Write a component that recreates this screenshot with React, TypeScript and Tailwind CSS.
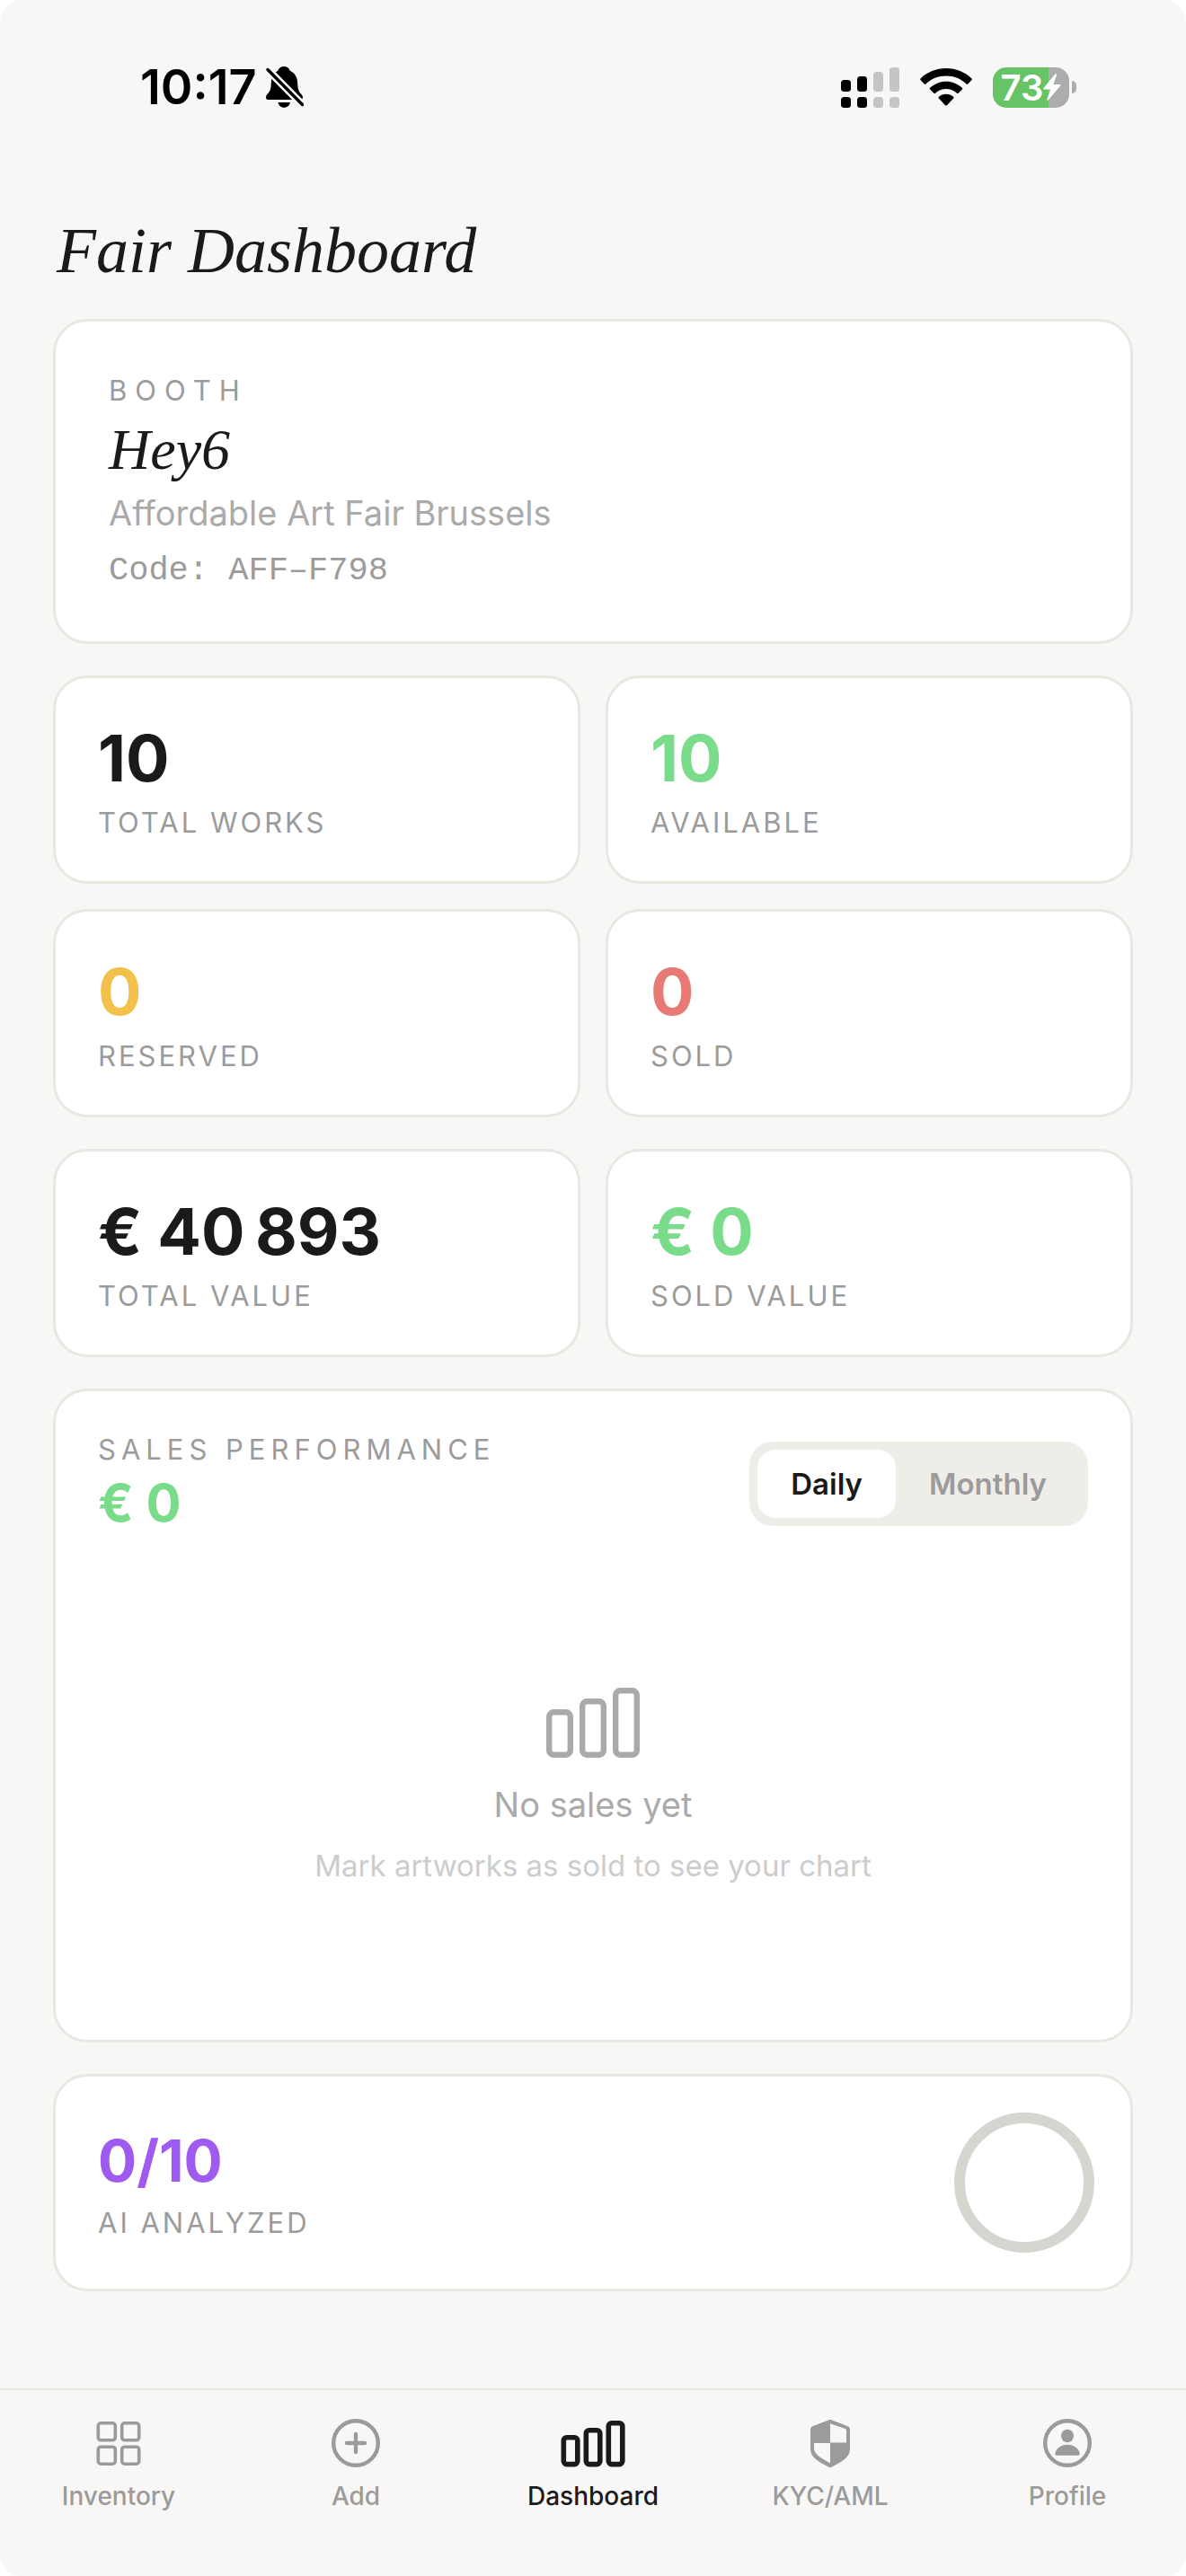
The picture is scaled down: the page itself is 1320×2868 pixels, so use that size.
import { useState } from "react";

const stats = [
  { label: "TOTAL WORKS", value: "10", color: "text-[#1a1a1a]" },
  { label: "AVAILABLE", value: "10", color: "text-[#7adc8b]" },
  { label: "RESERVED", value: "0", color: "text-[#f2c14b]" },
  { label: "SOLD", value: "0", color: "text-[#e77a75]" },
];

const values = [
  { label: "TOTAL VALUE", value: "€ 40\u202f893", color: "text-[#1a1a1a]" },
  { label: "SOLD VALUE", value: "€ 0", color: "text-[#7adc8b]" },
];

const tabs = [
  { id: "inventory", label: "Inventory", icon: GridIcon },
  { id: "add", label: "Add", icon: AddIcon },
  { id: "dashboard", label: "Dashboard", icon: BarsIcon },
  { id: "kyc", label: "KYC/AML", icon: ShieldIcon },
  { id: "profile", label: "Profile", icon: ProfileIcon },
];

function BellOffIcon() {
  return (
    <svg viewBox="0 0 42 46" className="h-[46px] w-[42px]" aria-hidden="true">
      <path
        d="M20 0c3.400 0 6 2 6.600 4.800 5.400 2.200 8.400 7.200 8.600 13.600.200 6.400 1 9 3.800 12 1.600 1.800 2 3 2 4.200 0 1.600-1.200 2.400-2.800 2.400H2.800C1.200 37 0 36 0 34.400c0-1.600.600-2.600 2.200-4.400 2.600-3 3.400-5.600 3.600-11.600C6 12 8.600 7 13.400 4.800 14.200 2 16.800 0 20 0z"
        fill="#000"
      />
      <path d="M13.500 40h13.400c-.500 3.400-3.300 5.800-6.700 5.800s-6.200-2.400-6.700-5.800z" fill="#000" />
      <path d="M2 3.500 40.500 42.500" stroke="#f8f7f5" strokeWidth="8.500" />
      <path d="M2 3.500 40.500 42.500" stroke="#000" strokeWidth="3.400" strokeLinecap="round" />
    </svg>
  );
}

function SignalIcon() {
  return (
    <svg viewBox="0 0 65 45" className="h-[45px] w-[65px]" aria-hidden="true">
      <g fill="#000">
        <rect x="0" y="14" width="11" height="13" rx="3.500" />
        <rect x="18" y="10" width="11" height="17" rx="3.500" />
        <rect x="0" y="33" width="11" height="12" rx="3.500" />
        <rect x="18" y="33" width="11" height="12" rx="3.500" />
      </g>
      <g fill="#c6c5c3">
        <rect x="36" y="5" width="11" height="22" rx="3.500" />
        <rect x="54" y="0" width="11" height="27" rx="3.500" />
        <rect x="36" y="33" width="11" height="12" rx="3.500" />
        <rect x="54" y="33" width="11" height="12" rx="3.500" />
      </g>
    </svg>
  );
}

function WifiIcon() {
  return (
    <svg viewBox="0 0 58 42" className="h-[42px] w-[58px]" aria-hidden="true">
      <path
        d="M29 0C18 0 8 4.300.500 11.400c-.500.500-.500 1.200 0 1.700l4.200 4.400c.500.500 1.200.500 1.700 0C12.300 11.900 20.300 8.600 29 8.600s16.700 3.300 22.600 8.900c.500.500 1.200.500 1.700 0l4.200-4.400c.500-.500.500-1.200 0-1.700C50 4.300 40 0 29 0z"
        fill="#000"
      />
      <path
        d="M29 14.700c-6.900 0-13.200 2.700-17.900 7.100-.500.500-.500 1.200 0 1.700l4.200 4.300c.500.500 1.200.500 1.700 0 3.200-2.900 7.400-4.700 12-4.700s8.800 1.800 12 4.700c.500.500 1.200.500 1.700 0l4.200-4.300c.500-.500.500-1.200 0-1.700-4.700-4.400-11-7.100-17.900-7.100z"
        fill="#000"
      />
      <path
        d="M29 28.800c-3.100 0-5.900 1.100-8.100 3-.600.500-.600 1.200-.100 1.700l7.300 7.700c.500.500 1.300.500 1.800 0l7.300-7.700c.500-.500.500-1.200-.100-1.700-2.200-1.900-5-3-8.100-3z"
        fill="#000"
      />
    </svg>
  );
}

function Battery() {
  return (
    <div className="flex items-center gap-[3px]">
      <div className="flex h-[45px] w-[85px] items-center justify-center rounded-[15px] bg-linear-to-r from-[#66c466] from-73% to-[#adacab] to-73%">
        <span className="text-[40px] leading-[45px] font-semibold text-white">73</span>
        <svg viewBox="0 0 20 30" className="h-[30px] w-5" aria-hidden="true">
          <path
            d="M13.300.600.400 16.300c-.500.700-.200 1.300.600 1.300h7.300L4.300 28.500c-.400 1.100.800 1.600 1.500.800L19.300 13.400c.500-.700.200-1.300-.600-1.300h-7.300L15 1.400C15.300.300 14-.300 13.300.600z"
            fill="#fff"
          />
        </svg>
      </div>
      <div className="h-[14px] w-[5px] rounded-r-full bg-[#adacab]" />
    </div>
  );
}

function GridIcon() {
  return (
    <svg viewBox="0 0 54 54" className="size-[54px]" fill="none" stroke="currentColor" strokeWidth="3.600" aria-hidden="true">
      <rect x="4.300" y="4.800" width="19" height="19" rx="3" />
      <rect x="30.700" y="4.800" width="19" height="19" rx="3" />
      <rect x="4.300" y="31.200" width="19" height="19" rx="3" />
      <rect x="30.700" y="31.200" width="19" height="19" rx="3" />
    </svg>
  );
}

function AddIcon() {
  return (
    <svg viewBox="0 0 54 54" className="size-[54px]" fill="none" stroke="currentColor" strokeWidth="4.400" aria-hidden="true">
      <circle cx="27" cy="27" r="24.800" />
      <path d="M27 17v20M17 27h20" strokeLinecap="round" />
    </svg>
  );
}

function BarsIcon() {
  return (
    <svg viewBox="0 0 72 54" className="h-[54px] w-[72px]" fill="none" stroke="currentColor" strokeWidth="5.600" aria-hidden="true">
      <rect x="3.300" y="20.800" width="15.500" height="29.800" rx="3.500" />
      <rect x="28.300" y="12.800" width="15.500" height="37.800" rx="3.500" />
      <rect x="53.300" y="4.800" width="15.500" height="45.800" rx="3.500" />
    </svg>
  );
}

function ShieldIcon() {
  return (
    <svg viewBox="0 0 54 54" className="size-[54px]" aria-hidden="true">
      <path
        d="M25.700 1.300 8.600 7.700C6.300 8.600 5 9.600 5 12v21.500c0 9 7.500 13.500 20.500 20.200.900.500 2.100.500 3 0C41.500 47 49 42.500 49 33.500V12c0-2.400-1.300-3.400-3.600-4.300L28.300 1.300c-.900-.300-1.700-.300-2.600 0z"
        fill="currentColor"
      />
      <path d="M27 5.300 44.200 11.300c.500.200.800.500.800 1.100V26.500H27z" fill="#f8f7f5" />
      <path d="M9 27H27V49.200C17 43.500 9 40 9 32.500z" fill="#f8f7f5" />
    </svg>
  );
}

function ProfileIcon() {
  return (
    <svg viewBox="0 0 54 54" className="size-[54px]" aria-hidden="true">
      <circle cx="27" cy="27" r="24.800" fill="none" stroke="currentColor" strokeWidth="4.400" />
      <ellipse cx="27" cy="19" rx="7" ry="7.300" fill="currentColor" />
      <path d="M15 40.700c-1.300 0-1.900-.800-1.700-2 .900-5.300 6.200-9.900 13.700-9.900s12.800 4.600 13.700 9.900c.200 1.200-.400 2-1.700 2z" fill="currentColor" />
    </svg>
  );
}

function StatCard({ label, value, color }: { label: string; value: string; color: string }) {
  return (
    <div className="rounded-[38px] border-3 border-[#e8e7e2] bg-white p-[47px]">
      <p className={`text-[72px] leading-[84px] font-bold ${color}`}>{value}</p>
      <p className="mt-3 text-[31px] leading-9 tracking-[3px] text-[#9b9b9b]">{label}</p>
    </div>
  );
}

export default function App() {
  const [period, setPeriod] = useState("Daily");
  const [activeTab, setActiveTab] = useState("dashboard");

  return (
    <div className="bg-white font-['Inter','Liberation_Sans',sans-serif]">
      <div className="flex min-h-screen flex-col rounded-[24px] bg-[#f8f7f5]">
        {/* STATUS BAR */}
        <div className="flex h-[134px] items-center justify-between pt-[60px] pr-[122px] pl-[156px] text-black">
          <div className="flex items-center gap-2.5">
            <span className="text-[54px] leading-[74px] font-semibold">10:17</span>
            <BellOffIcon />
          </div>
          <div className="flex items-center gap-[23px]">
            <SignalIcon />
            <WifiIcon />
            <Battery />
          </div>
        </div>

        <main className="flex-1 px-[59px] pt-[101px]">
          <h1 className="pl-1 font-['Liberation_Serif',serif] text-[72px] leading-[88px] text-[#1a1a1a] italic">
            Fair Dashboard
          </h1>

          <div className="mt-8 flex flex-col gap-[35px]">
            {/* BOOTH */}
            <section className="rounded-[38px] border-3 border-[#e8e7e2] bg-white px-[59px] pt-[59px] pb-[51px]">
              <p className="text-[31px] leading-9 tracking-[9px] text-[#9b9b9b]">BOOTH</p>
              <h2 className="mt-1.5 font-['Liberation_Serif',serif] text-[64px] leading-[84px] text-[#1a1a1a] italic">
                Hey6
              </h2>
              <p className="text-[38px] leading-14 text-[#aaaaaa]">Affordable Art Fair Brussels</p>
              <p className="mt-2 font-['Liberation_Mono',monospace] text-[37px] leading-14 text-[#9b9b9b]">
                Code: AFF–F798
              </p>
            </section>

            {/* STATS */}
            <section className="grid grid-cols-2 gap-7">
              {stats.map((stat) => (
                <StatCard key={stat.label} {...stat} />
              ))}
            </section>
            <section className="grid grid-cols-2 gap-7">
              {values.map((stat) => (
                <StatCard key={stat.label} {...stat} />
              ))}
            </section>

            {/* SALES PERFORMANCE */}
            <section className="rounded-[38px] border-3 border-[#e8e7e2] bg-white p-[47px]">
              <div className="flex items-center justify-between">
                <div>
                  <h2 className="text-[31px] leading-9 tracking-[6px] text-[#9b9b9b]">SALES PERFORMANCE</h2>
                  <p className="mt-1.5 text-[58px] leading-[70px] font-bold text-[#7adc8b]">€ 0</p>
                </div>
                <div className="flex rounded-[26px] bg-[#eeede8] p-[9px]">
                  {["Daily", "Monthly"].map((name) => (
                    <button
                      key={name}
                      type="button"
                      aria-pressed={period === name}
                      onClick={() => setPeriod(name)}
                      className={`rounded-[20px] px-[37px] py-[18px] text-[33px] leading-10 font-semibold ${
                        period === name ? "bg-white text-[#1a1a1a]" : "text-[#9b9b9b]"
                      }`}
                    >
                      {name}
                    </button>
                  ))}
                </div>
              </div>

              <div className="mt-11 flex h-[472px] flex-col items-center justify-center text-center">
                <svg
                  viewBox="0 0 104 78"
                  className="h-[78px] w-[104px] text-[#aaaaaa]"
                  fill="none"
                  stroke="currentColor"
                  strokeWidth="6.400"
                  aria-hidden="true"
                >
                  <rect x="3.200" y="27.200" width="23.600" height="47.600" rx="5" />
                  <rect x="40.200" y="15.200" width="23.600" height="59.600" rx="5" />
                  <rect x="77.200" y="3.200" width="23.600" height="71.600" rx="5" />
                </svg>
                <p className="mt-7 text-[38px] leading-12 text-[#aaaaaa]">No sales yet</p>
                <p className="mt-6 text-[33px] leading-10 text-[#cccccc]">
                  Mark artworks as sold to see your chart
                </p>
              </div>
            </section>

            {/* AI ANALYZED */}
            <section className="flex items-center justify-between rounded-[38px] border-3 border-[#e8e7e2] bg-white py-10 pr-10 pl-[47px]">
              <div>
                <p className="text-[64px] leading-[78px] font-bold text-[#9f5bf0]">0/10</p>
                <p className="mt-3 text-[31px] leading-9 tracking-[3px] text-[#9b9b9b]">AI ANALYZED</p>
              </div>
              <div className="size-[156px] rounded-full border-12 border-[#d6d5cf]" />
            </section>
          </div>
        </main>

        {/* TAB BAR */}
        <nav className="flex border-t-2 border-[#e7e6df] pt-8 pb-18">
          {tabs.map(({ id, label, icon: Icon }) => (
            <button
              key={id}
              type="button"
              onClick={() => setActiveTab(id)}
              className={`flex flex-1 flex-col items-center gap-[15px] ${
                activeTab === id ? "text-[#1a1a1a]" : "text-[#9b9b9b]"
              }`}
            >
              <Icon />
              <span className="text-[28px] leading-[34px] font-medium">{label}</span>
            </button>
          ))}
        </nav>
      </div>
    </div>
  );
}
